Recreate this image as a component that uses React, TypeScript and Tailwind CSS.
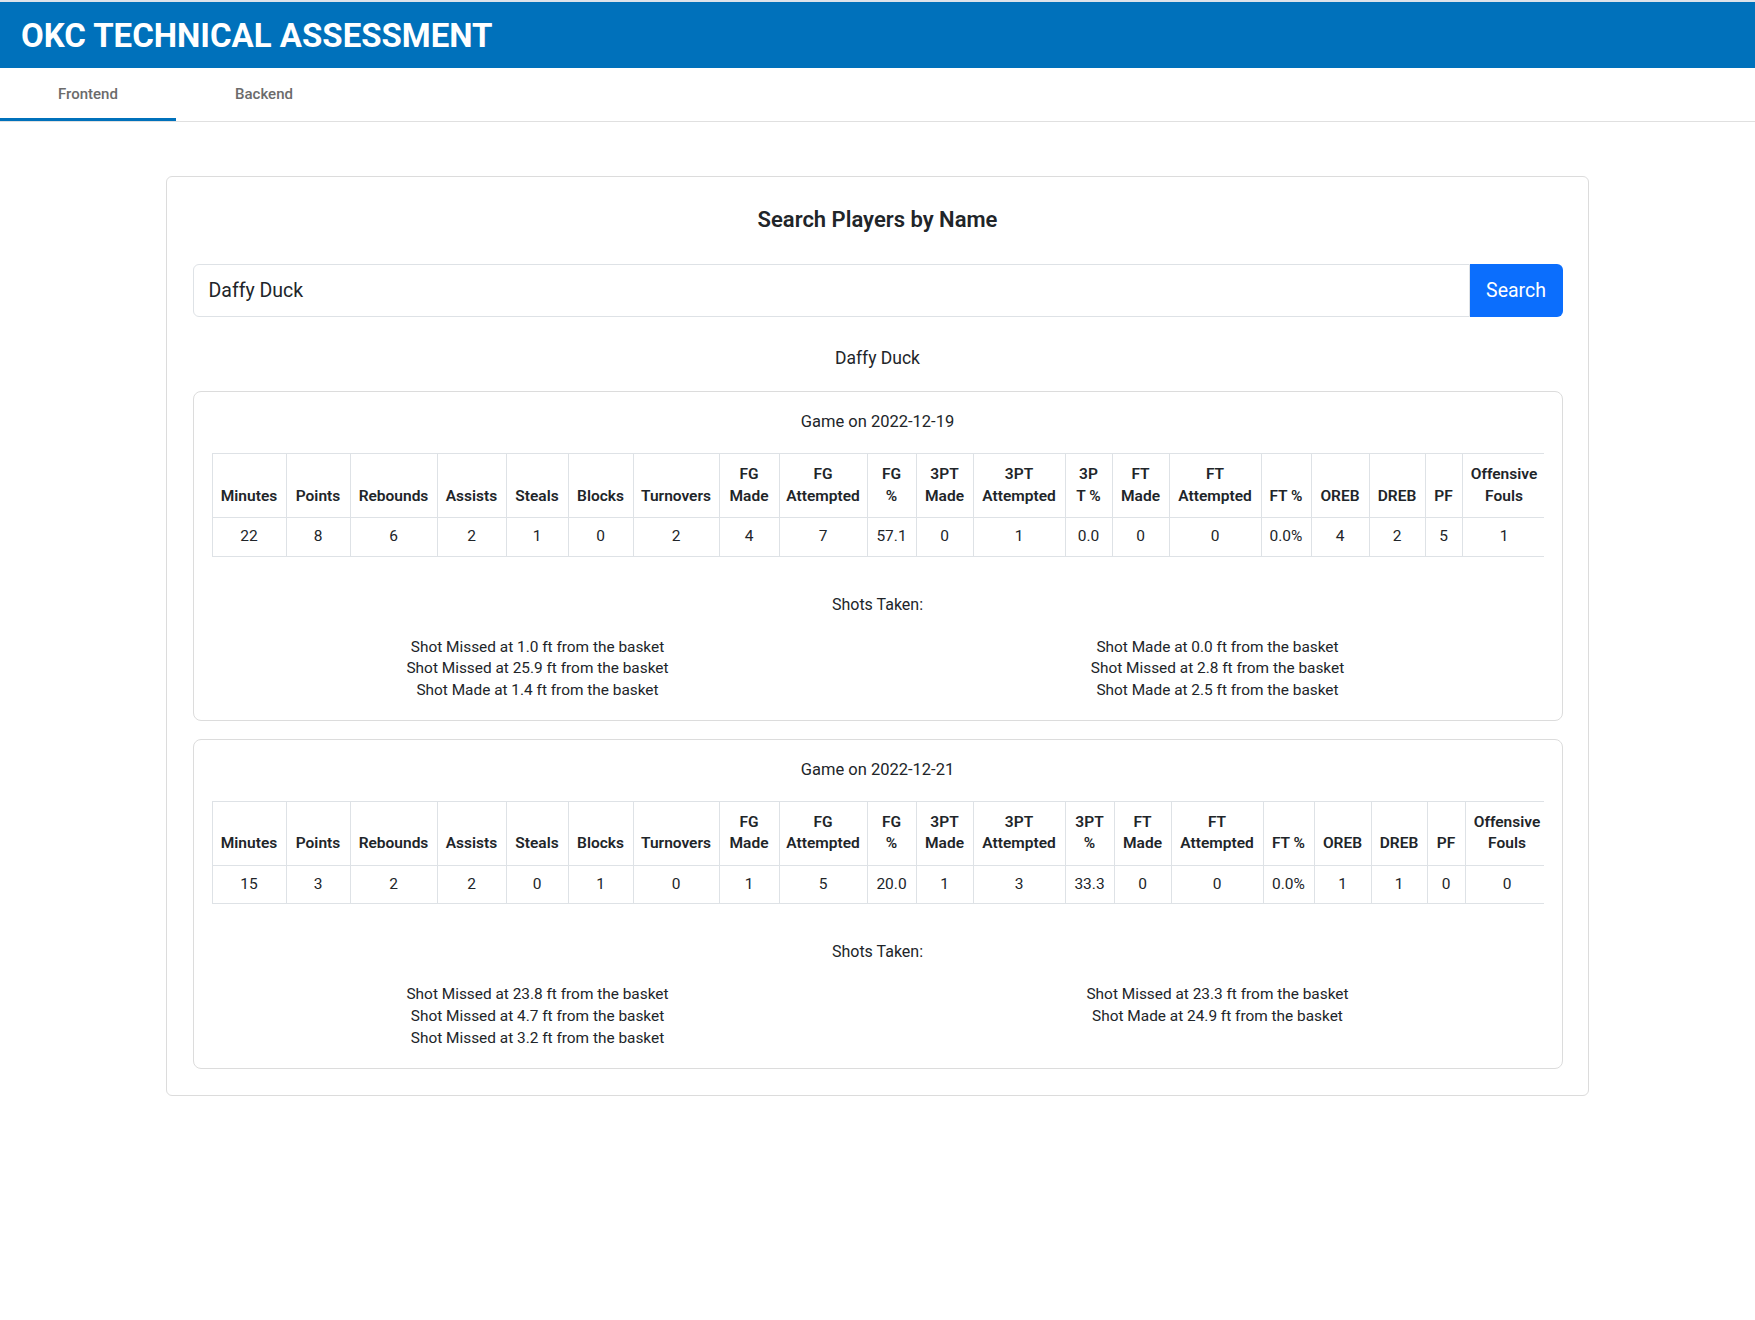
import React from 'react';

interface GameLog {
  date: string;
  widths: number[];
  headers: string[][];
  values: string[];
  shotsLeft: string[];
  shotsRight: string[];
}

const games: GameLog[] = [
  {
    date: '2022-12-19',
    widths: [74, 64, 87, 69, 62, 65, 86, 60, 88, 49, 57, 92, 47, 57, 92, 50, 58, 56, 37, 84],
    headers: [
      ['Minutes'], ['Points'], ['Rebounds'], ['Assists'], ['Steals'], ['Blocks'], ['Turnovers'],
      ['FG', 'Made'], ['FG', 'Attempted'], ['FG', '%'], ['3PT', 'Made'], ['3PT', 'Attempted'],
      ['3P', 'T %'], ['FT', 'Made'], ['FT', 'Attempted'], ['FT %'], ['OREB'], ['DREB'], ['PF'],
      ['Offensive', 'Fouls'],
    ],
    values: ['22', '8', '6', '2', '1', '0', '2', '4', '7', '57.1', '0', '1', '0.0', '0', '0', '0.0%', '4', '2', '5', '1'],
    shotsLeft: [
      'Shot Missed at 1.0 ft from the basket',
      'Shot Missed at 25.9 ft from the basket',
      'Shot Made at 1.4 ft from the basket',
    ],
    shotsRight: [
      'Shot Made at 0.0 ft from the basket',
      'Shot Missed at 2.8 ft from the basket',
      'Shot Made at 2.5 ft from the basket',
    ],
  },
  {
    date: '2022-12-21',
    widths: [74, 64, 87, 69, 62, 65, 86, 60, 88, 49, 57, 92, 49, 57, 92, 51, 57, 56, 38, 84],
    headers: [
      ['Minutes'], ['Points'], ['Rebounds'], ['Assists'], ['Steals'], ['Blocks'], ['Turnovers'],
      ['FG', 'Made'], ['FG', 'Attempted'], ['FG', '%'], ['3PT', 'Made'], ['3PT', 'Attempted'],
      ['3PT', '%'], ['FT', 'Made'], ['FT', 'Attempted'], ['FT %'], ['OREB'], ['DREB'], ['PF'],
      ['Offensive', 'Fouls'],
    ],
    values: ['15', '3', '2', '2', '0', '1', '0', '1', '5', '20.0', '1', '3', '33.3', '0', '0', '0.0%', '1', '1', '0', '0'],
    shotsLeft: [
      'Shot Missed at 23.8 ft from the basket',
      'Shot Missed at 4.7 ft from the basket',
      'Shot Missed at 3.2 ft from the basket',
    ],
    shotsRight: [
      'Shot Missed at 23.3 ft from the basket',
      'Shot Made at 24.9 ft from the basket',
    ],
  },
];

const GameCard: React.FC<{ game: GameLog }> = ({ game }) => {
  const tableWidth = game.widths.reduce((sum, w) => sum + w, 0);

  return (
    <div className="border border-[#dcdcdc] rounded-[8px] px-[18px] pt-[17px] pb-[18px]">
      <h5 className="text-center text-[16.5px] leading-[26px] text-[#212529]">Game on {game.date}</h5>

      <div className="mt-[18px] overflow-hidden">
        <table className="table-fixed border-collapse text-[15.5px] text-[#212529]" style={{ width: tableWidth }}>
          <thead>
            <tr>
              {game.headers.map((lines, i) => (
                <th
                  key={i}
                  style={{ width: game.widths[i] }}
                  className="border border-[#dee2e6] px-[6px] py-[10px] align-bottom text-center font-semibold leading-[21.5px]"
                >
                  {lines.map((line, j) => (
                    <div key={j} className="whitespace-nowrap">{line}</div>
                  ))}
                </th>
              ))}
            </tr>
          </thead>
          <tbody>
            <tr>
              {game.values.map((value, i) => (
                <td key={i} className="border border-[#dee2e6] px-[6px] py-[8px] text-center leading-[21.5px]">
                  {value}
                </td>
              ))}
            </tr>
          </tbody>
        </table>
      </div>

      <h6 className="mt-[36px] text-center text-[16px] leading-[24px] text-[#212529]">Shots Taken:</h6>

      <div className="-mx-[14px] mt-[20px] grid grid-cols-2 text-center text-[15.4px] leading-[21.8px] text-[#212529]">
        <div>
          {game.shotsLeft.map((shot, i) => (
            <div key={i}>{shot}</div>
          ))}
        </div>
        <div>
          {game.shotsRight.map((shot, i) => (
            <div key={i}>{shot}</div>
          ))}
        </div>
      </div>
    </div>
  );
};

const App: React.FC = () => {
  return (
    <div className="min-h-screen bg-white font-[Roboto,sans-serif] text-[#212529]">
      <header className="border-t-2 border-[#dde3ea] bg-[#0071bb] h-[68px] flex items-center px-[21px]">
        <h1 className="text-[33px] font-bold leading-none text-white">OKC TECHNICAL ASSESSMENT</h1>
      </header>

      <nav className="flex h-[54px] border-b border-[#e0e0e0]">
        <button className="w-[176px] border-b-[3px] border-[#0071bb] pt-[2px] text-[15px] font-medium text-[#6b6b6b]">
          Frontend
        </button>
        <button className="w-[176px] border-b-[3px] border-transparent pt-[2px] text-[15px] font-medium text-[#6b6b6b]">
          Backend
        </button>
      </nav>

      <main className="pt-[54px] pb-10">
        <div className="mx-auto w-[1423px] border border-[#dcdcdc] rounded-[6px] px-[25.5px] pt-[28px] pb-[26px]">
          <h4 className="text-center text-[22px] font-semibold leading-[30px] text-[#212529]">Search Players by Name</h4>

          <div className="mt-[29px] flex h-[53px]">
            <input
              type="text"
              defaultValue="Daffy Duck"
              className="flex-1 rounded-l-[6px] border border-[#dee2e6] pl-[15px] text-[19.5px] text-[#212529] outline-none"
            />
            <button className="w-[93px] rounded-r-[6px] bg-[#0b6efd] text-[19.5px] text-white">Search</button>
          </div>

          <p className="mt-[28px] text-center text-[17.5px] leading-[26px]">Daffy Duck</p>

          <div className="mt-[20px] flex flex-col gap-[18px]">
            {games.map((game) => (
              <GameCard key={game.date} game={game} />
            ))}
          </div>
        </div>
      </main>
    </div>
  );
};

export default App;
